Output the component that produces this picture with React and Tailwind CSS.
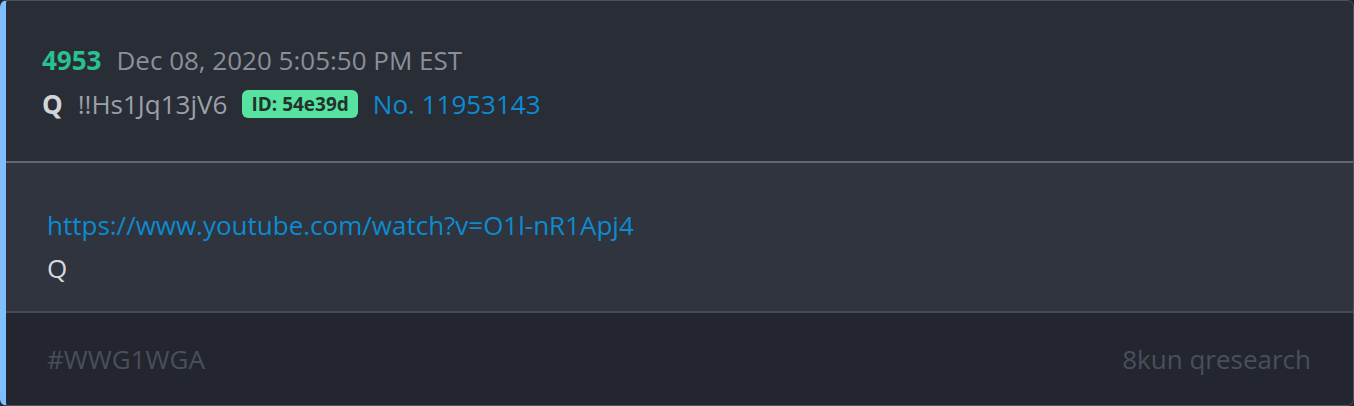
export default function App() {
  return (
    <div className="w-[1354px] h-[406px] bg-[#23262e]" style={{ fontFamily: '"Open Sans", "Noto Sans", sans-serif' }}>
      <div className="h-[406px] flex flex-col border border-[#4d525c] border-l-[6px] border-l-[#80bfff] rounded-[7px] overflow-hidden">
        <div className="h-[160px] shrink-0 bg-[#292d36] flex flex-col justify-center pl-[36px] pt-[1px] leading-[44px] text-[26px]">
          <div className="flex items-baseline">
            <span className="font-bold text-[#2bc08f]">4953</span>
            <span className="ml-[15px] text-[#8a8f99]">Dec 08, 2020 5:05:50 PM EST</span>
          </div>
          <div className="flex items-center">
            <span className="font-bold text-[#d2d4d8]">Q</span>
            <span className="ml-[15px] text-[#9ba0aa]">!!Hs1Jq13jV6</span>
            <span className="ml-[15px] h-[28px] px-[9px] rounded-[6px] bg-[#56e39f] text-[#24312d] font-bold text-[19px] leading-[28px]">ID: 54e39d</span>
            <span className="ml-[15px] text-[#0d8bd0]">No. 11953143</span>
          </div>
        </div>
        <div className="h-[2px] shrink-0 bg-[#63676f]"></div>
        <div className="h-[148px] shrink-0 bg-[#2f343e] pl-[41px] pt-[40px] leading-[44px] text-[26px]">
          <div className="text-[#0d8bd0]">https://www.youtube.com/watch?v=O1l-nR1Apj4</div>
          <div className="text-[#d8dadd] -mt-[1px]">Q</div>
        </div>
        <div className="h-[2px] shrink-0 bg-[#454a54]"></div>
        <div className="flex-1 bg-[#23262e] flex items-center justify-between pl-[41px] pr-[42px] text-[26px] text-[#4a4f5a]">
          <span>#WWG1WGA</span>
          <span>8kun qresearch</span>
        </div>
      </div>
    </div>
  );
}
